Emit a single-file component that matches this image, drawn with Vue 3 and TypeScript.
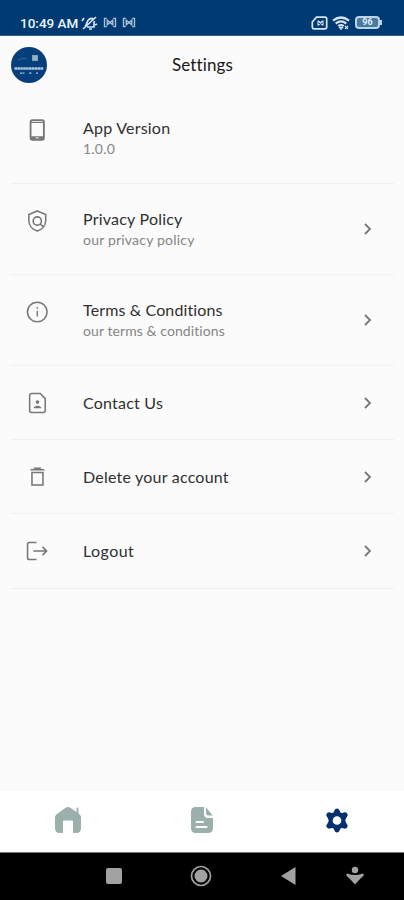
<script setup lang="ts">
interface SettingItem {
  id: string
  title: string
  subtitle?: string
  link: boolean
}

const items: SettingItem[] = [
  { id: 'version', title: 'App Version', subtitle: '1.0.0', link: false },
  { id: 'privacy', title: 'Privacy Policy', subtitle: 'our privacy policy', link: true },
  { id: 'terms', title: 'Terms & Conditions', subtitle: 'our terms & conditions', link: true },
  { id: 'contact', title: 'Contact Us', link: true },
  { id: 'delete', title: 'Delete your account', link: true },
  { id: 'logout', title: 'Logout', link: true },
]
</script>

<template>
  <div class="screen">
    <div class="status">
      <span class="time">10:49 AM</span>
      <svg class="bell" viewBox="0 0 17 16" fill="none" stroke="currentColor" stroke-width="1.700">
        <path d="M4 11.500c2-1.500 1.500-4 3-6 1.500-2 4-2.500 6-1M13.500 6c-.5 2-1 3-.5 6H6M8 14h3M2 14 15 2M1 6l2-3M14 10l2-1" />
      </svg>
      <svg v-for="n in 2" :key="n" class="cast" viewBox="0 0 14 12" fill="none" stroke="currentColor" stroke-width="1.500">
        <path d="M3.500 1.500H1v9h2.500M10.500 1.500H13v9h-2.500M4 3.500v5l3-2.500 3 2.500v-5L7 6 4 3.500Z" />
      </svg>
      <span class="grow"></span>
      <svg class="sim" viewBox="0 0 17 14" fill="none" stroke="currentColor" stroke-width="1.700">
        <path d="M5.500 1.200H14q1.700 0 1.700 1.700v8.200q0 1.700-1.700 1.700H3q-1.700 0-1.700-1.700V6Z" />
        <path d="m7.500 5 4 4M11.500 5l-4 4M7 4.500v5M12 4.500v5" stroke-width="1.100" />
      </svg>
      <svg class="wifi" viewBox="0 0 18 14" fill="none" stroke="currentColor" stroke-width="2.200">
        <path d="M1 4.700Q9-1.700 17 4.700M3.700 7.600q5.300-4.300 10.600 0M6.300 10.200q2.700-2.200 5.400 0" />
        <path d="m7.500 11.500 1.500 2 1.500-2ZM13 10l3 3M16 10l-3 3" stroke-width="1.100" />
      </svg>
      <span class="battery">96</span>
    </div>

    <header class="header">
      <svg class="avatar" viewBox="0 0 36 36">
        <circle cx="18" cy="18" r="18" fill="#063f7c" />
        <path d="M7 13q4-3 9-1" stroke="#356b91" stroke-width="1" fill="none" />
        <rect x="21" y="8" width="6" height="6" fill="#7fa4b9" />
        <path d="M23 9v4M25 9v4" stroke="#b9cdd6" stroke-width=".7" />
        <path d="M3.500 21.500h29" stroke="#aac6da" stroke-width="2.600" stroke-dasharray="2.600 .3" />
        <path d="M9 26.200h5M18 26.200h3M25 26.200h2" stroke="#6da0c5" stroke-width="1.800" stroke-dasharray="2 .5" />
      </svg>
      <h1>Settings</h1>
    </header>

    <main class="list">
      <div v-for="item in items" :key="item.id" class="row" :class="[item.id, { compact: !item.subtitle }]">
        <svg class="icon" viewBox="0 0 24 24" fill="none" stroke="currentColor" stroke-width="1.700">
          <template v-if="item.id === 'version'">
            <rect x="5" y="1.200" width="14.500" height="21.600" rx="2" stroke-width="2" />
            <path d="M5.500 3.700h13.500" stroke-width="1.300" />
            <path d="M5.500 20.300h13.500" stroke-width="3" />
            <path d="M10.500 20.600h3.500" stroke="#fbfbfb" stroke-width="1" />
          </template>
          <template v-else-if="item.id === 'privacy'">
            <path d="m12.300 1 9.200 3.900v6.600c0 5.400-3.900 9.900-9.200 11.500C7 21.400 3.100 16.900 3.100 11.500V4.900Z" />
            <circle cx="12.300" cy="12" r="4.500" />
            <path d="m15.500 15.200 3.800 3.600" />
          </template>
          <template v-else-if="item.id === 'terms'">
            <circle cx="12.300" cy="12" r="10.700" />
            <path d="M12.300 10.500V17M12.300 6.500v2" stroke-width="1.500" />
          </template>
          <template v-else-if="item.id === 'contact'">
            <path d="M5.700 1.700h9.800l5.500 5.500v12.900q0 2.200-2.200 2.200H6.200Q4 22.300 4 20.100V3.900q0-2.200 2.200-2.200Z" />
            <circle cx="12.500" cy="11" r="2" fill="currentColor" stroke="none" />
            <path d="M8.500 17.800v-1.200q4-3 8 0v1.200Z" fill="currentColor" stroke="none" />
          </template>
          <template v-else-if="item.id === 'delete'">
            <path d="M5 4.100h15M9.500 3.800V2.500h6v1.300M6.500 7h12v13.800h-12Z" />
          </template>
          <template v-else>
            <path d="M11.500 2.700H3.700q-2 0-2 2v14.600q0 2 2 2h7.800M8 12h14.500M18 7.500l4.500 4.500-4.500 4.500" />
          </template>
        </svg>
        <div class="copy">
          <div class="title">{{ item.title }}</div>
          <div v-if="item.subtitle" class="subtitle">{{ item.subtitle }}</div>
        </div>
        <svg v-if="item.link" class="chevron" viewBox="0 0 8 12" fill="none" stroke="currentColor" stroke-width="1.800">
          <path d="m1 1 5 5-5 5" />
        </svg>
      </div>
    </main>

    <nav class="tabs">
      <svg class="home" viewBox="0 0 28 28" fill="currentColor">
        <path d="M1 11.500q0-2 1.600-3.200L11.300 1.900Q14 0 16.700 1.900L22.500 6V2.500q0-1 1-1t1 1v5l1 .8Q27 9.500 27 11.500V22q0 5-5 5h-3V15.500q0-1-1-1h-8q-1 0-1 1V27H6q-5 0-5-5Z" />
      </svg>
      <svg class="document" viewBox="0 0 24 28" fill="currentColor">
        <path fill-rule="evenodd" d="M6 1h8v7q0 4 4 4h5v10q0 5-5 5H6q-5 0-5-5V6q0-5 5-5Zm.5 14q-1 0-1 1t1 1H13q1 0 1-1t-1-1Zm0 5q-1 0-1 1t1 1h10q1 0 1-1t-1-1Z" />
        <path d="M16 1.300 22.700 9.500h-4.200q-2.500 0-2.500-2.500Z" />
      </svg>
      <svg class="gear" viewBox="0 0 28 28" fill="currentColor">
        <path fill-rule="evenodd" d="M14 1q2 0 2.800 2.200l.7 1.700q.6 1.200 2 .9l2-.5q2.300-.5 3.600 1.300 1.200 2-.5 3.700l-1.100 1.900q-1 1.800 0 3.600l1.100 1.900q1.700 1.700.5 3.700-1.300 1.800-3.600 1.300l-2-.5q-1.400-.3-2 .9l-.7 1.700Q16 27 14 27t-2.800-2.200l-.7-1.700q-.6-1.200-2-.9l-2 .5q-2.300.5-3.600-1.300-1.200-2 .5-3.700l1.100-1.900q1-1.800 0-3.600l-1.100-1.900Q1.700 8.600 2.900 6.600 4.200 4.800 6.500 5.300l2 .5q1.400.3 2-.9l.7-1.700Q12 1 14 1Zm0 8.300a4.700 4.700 0 1 0 0 9.400 4.700 4.700 0 0 0 0-9.400Z" />
      </svg>
    </nav>

    <div class="system">
      <span class="recent"></span>
      <svg class="circle" viewBox="0 0 22 22">
        <circle cx="11" cy="11" r="9.500" fill="none" stroke="currentColor" stroke-width="1.700" />
        <circle cx="11" cy="11" r="6.500" fill="currentColor" />
      </svg>
      <svg class="back" viewBox="0 0 15 18" fill="currentColor"><path d="M0 9 14.500 0v18Z" /></svg>
      <svg class="access" viewBox="0 0 18 20" fill="currentColor">
        <circle cx="9" cy="4" r="3.200" />
        <path d="M1.200 7.500Q9 10.500 16.800 7.500q1.800 1 .2 2.700l-2.500 2.300L9 18.500l-5.500-6L1 10.200Q-.6 8.500 1.200 7.500Z" />
      </svg>
    </div>
  </div>
</template>

<style>
body { margin: 0; }
</style>

<style scoped>
* { box-sizing: border-box; }
svg { display: block; flex: none; }
.screen {
  width: 404px;
  height: 900px;
  display: flex;
  flex-direction: column;
  overflow: hidden;
  background: #fbfbfb;
  font-family: Lato, "Open Sans", sans-serif;
}
.status {
  height: 36px;
  flex: none;
  display: flex;
  align-items: center;
  padding: 10px 24px 0 20px;
  background: #003a72;
  border-bottom: 1px solid #345f8a;
  color: #d7e4f4;
}
.time { width: 61px; font: 500 13.500px/18px Roboto, sans-serif; white-space: nowrap; color: #edf5ff; }
.bell { width: 17px; height: 16px; margin-right: 5px; }
.cast { width: 14px; height: 11px; margin-right: 5px; opacity: .8; }
.grow { flex: 1; }
.sim { width: 17px; height: 14px; margin-right: 4px; }
.wifi { width: 18px; height: 14px; margin-right: 5px; }
.battery {
  position: relative;
  width: 25px;
  height: 13px;
  border: 2px solid #bdd2e7;
  border-radius: 4px;
  background: #477c9e;
  color: #e0edf6;
  font: 700 9px/9px Roboto, sans-serif;
  text-align: center;
}
.battery::after { content: ""; position: absolute; right: -4px; top: 2px; width: 2px; height: 5px; background: #bdd2e7; }
.header { height: 57px; flex: none; display: grid; grid-template-columns: 1fr auto 1fr; align-items: center; padding: 0 10px 0 11px; }
.avatar { width: 36px; height: 36px; }
h1 { margin: 0; font-size: 17px; line-height: 24px; font-weight: 400; letter-spacing: .1px; color: #181818; }
.list { flex: 1; padding: 0 10px; }
.row { height: 91px; display: flex; align-items: flex-start; padding: 25px 22px 0 16px; border-bottom: 1px solid #f0f0f0; }
.row.compact { height: 74.200px; }
.icon { width: 22px; height: 24px; color: #777; }
.copy { flex: 1; margin-left: 35px; white-space: nowrap; }
.title { font-size: 16px; line-height: 20px; color: #303030; letter-spacing: .22px; }
.terms .title { letter-spacing: .13px; }
.logout .title { letter-spacing: .45px; }
.subtitle { font-size: 14px; line-height: 22px; color: #858585; letter-spacing: .2px; }
.terms .subtitle { letter-spacing: .08px; }
.compact .title { line-height: 24px; }
.chevron { width: 8px; height: 12px; margin-top: 14px; color: #777; }
.compact .chevron { margin-top: 6px; }
.tabs { height: 63px; flex: none; display: grid; grid-template-columns: repeat(3, 1fr); place-items: center; padding: 0 0 2px 1px; background: #fff; border-top: 1px solid #f5f5f5; }
.home, .document { color: #9bb0aa; }
.home { width: 28px; height: 28px; }
.document { width: 24px; height: 28px; }
.gear { width: 26px; height: 27px; color: #062f6f; }
.system { height: 48px; flex: none; display: flex; align-items: center; padding: 0 0 2px 106px; background: #000; color: #a2a2a2; border-top: 1px solid #777; }
.recent { width: 16px; height: 16px; border-radius: 2px; background: #a2a2a2; }
.circle { width: 22px; height: 22px; margin-left: 68px; }
.back { width: 15px; height: 18px; margin-left: 69px; }
.access { width: 18px; height: 20px; margin-left: 50px; }
</style>
